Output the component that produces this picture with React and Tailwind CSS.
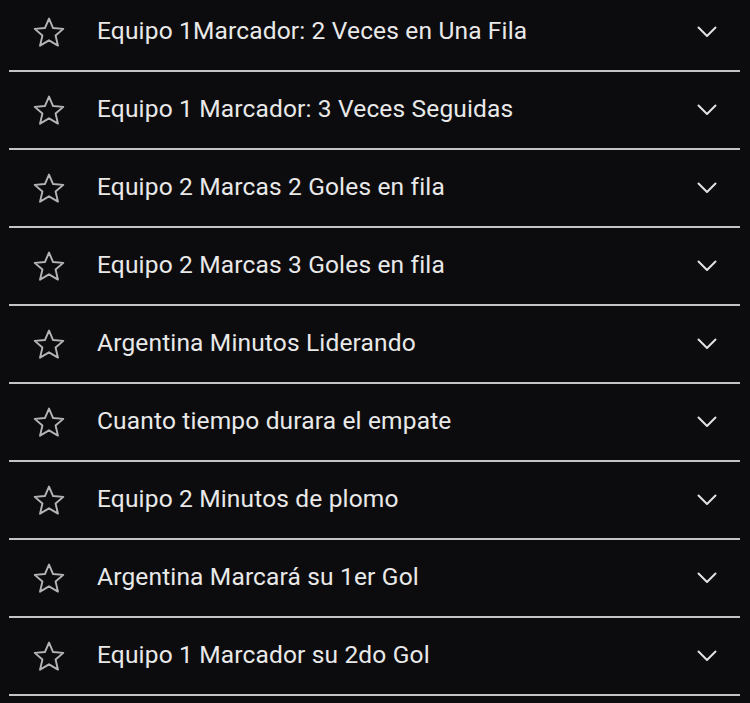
import React from "react";

const items = [
  "Equipo 1Marcador: 2 Veces en Una Fila",
  "Equipo 1 Marcador: 3 Veces Seguidas",
  "Equipo 2 Marcas 2 Goles en fila",
  "Equipo 2 Marcas 3 Goles en fila",
  "Argentina Minutos Liderando",
  "Cuanto tiempo durara el empate",
  "Equipo 2 Minutos de plomo",
  "Argentina Marcará su 1er Gol",
  "Equipo 1 Marcador su 2do Gol",
];

function Star() {
  return (
    <svg width="34" height="33" viewBox="0 0 30 29" fill="none">
      <path
        d="M15 2.2 L18.6 10.6 L27.6 11.3 L20.8 17.2 L22.9 26.1 L15 21.4 L7.1 26.1 L9.2 17.2 L2.4 11.3 L11.4 10.6 Z"
        stroke="#b4b4b6"
        strokeWidth="1.7"
        strokeLinejoin="round"
      />
    </svg>
  );
}

function Chevron() {
  return (
    <svg width="20" height="12" viewBox="0 0 20 12" fill="none">
      <path d="M1.5 1.5 L10 10 L18.5 1.5" stroke="#e2e2e2" strokeWidth="2" strokeLinecap="round" strokeLinejoin="round" />
    </svg>
  );
}

export default function App() {
  return (
    <div className="w-[750px] h-[703px] overflow-hidden bg-[#0c0c0e]" style={{ fontFamily: "Roboto, 'Noto Sans', sans-serif" }}>
      <div className="-mt-[6px] flex flex-col px-[9px] pr-[10px]">
        {items.map((t) => (
          <div key={t} className="flex flex-col">
            <div className="h-[76px] flex items-center">
              <div className="w-[88px] pl-[23px] flex items-center">
                <Star />
              </div>
              <div className="flex-1 text-[24.5px] tracking-[0.16px] text-[#e9e9e9] leading-none -mt-[1px]">{t}</div>
              <div className="pr-[23px] flex items-center">
                <Chevron />
              </div>
            </div>
            <div className="h-[2px] bg-[#c4c4c6]" />
          </div>
        ))}
      </div>
    </div>
  );
}
